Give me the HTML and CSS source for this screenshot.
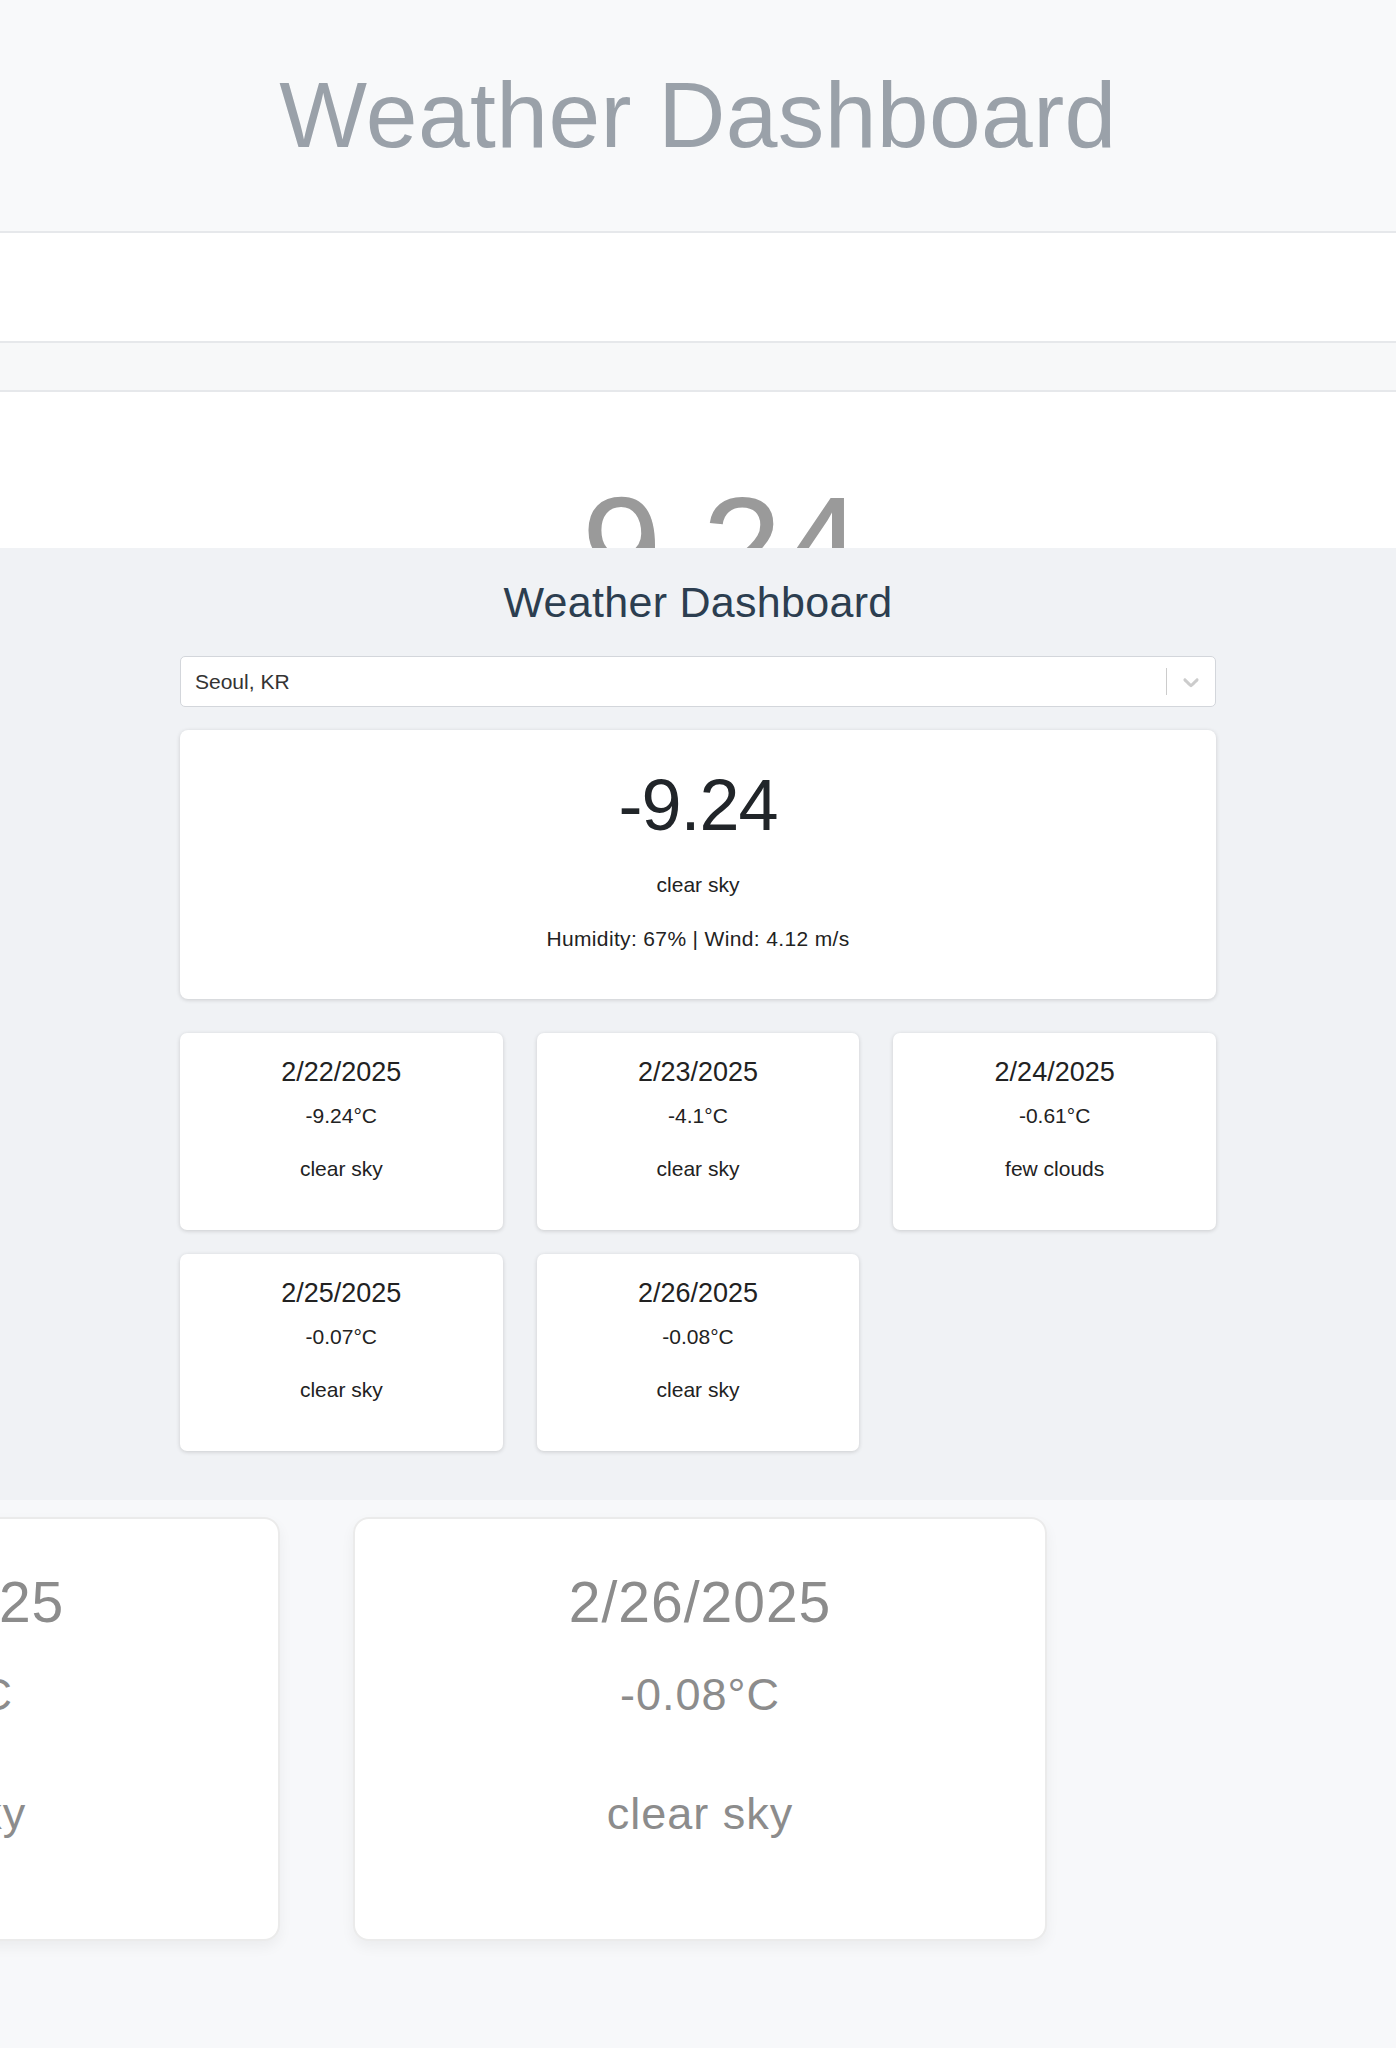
FILE: index.html
```html
<!DOCTYPE html>
<html lang="en">
<head>
<meta charset="utf-8">
<title>Weather Dashboard</title>
<link rel="stylesheet" href="styles.css">
</head>
<body>
<div class="page">
  <section class="ghost-top" aria-hidden="true">
    <header class="ghost-header"><div class="ghost-title">Weather Dashboard</div></header>
    <div class="ghost-strip ghost-strip-white"></div>
    <div class="ghost-strip ghost-strip-light"></div>
    <div class="ghost-card"><div class="ghost-temp">-9.24</div></div>
  </section>

  <main class="dashboard">
    <div class="container">
      <h1 class="title">Weather Dashboard</h1>

      <div class="select">
        <div class="select-value">Seoul, KR</div>
        <span class="select-separator"></span>
        <div class="select-indicator">
          <svg width="26" height="26" viewBox="0 0 20 20" aria-hidden="true"><path fill="#cccccc" d="M4.516 7.548c0.436-0.446 1.043-0.481 1.576 0l3.908 3.747 3.908-3.747c0.533-0.481 1.141-0.446 1.574 0 0.436 0.445 0.408 1.197 0 1.615-0.406 0.418-4.695 4.502-4.695 4.502-0.217 0.223-0.502 0.335-0.787 0.335s-0.57-0.112-0.789-0.335c0 0-4.287-4.084-4.695-4.502s-0.436-1.17 0-1.615z"/></svg>
        </div>
      </div>

      <div class="current">
        <div class="current-value">-9.24</div>
        <p class="current-desc">clear sky</p>
        <p class="current-meta">Humidity: 67% | Wind: 4.12 m/s</p>
      </div>

      <div class="forecast">
        <div class="fcard"><div class="fdate">2/22/2025</div><p class="ftemp">-9.24°C</p><p class="fdesc">clear sky</p></div>
        <div class="fcard"><div class="fdate">2/23/2025</div><p class="ftemp">-4.1°C</p><p class="fdesc">clear sky</p></div>
        <div class="fcard"><div class="fdate">2/24/2025</div><p class="ftemp">-0.61°C</p><p class="fdesc">few clouds</p></div>
        <div class="fcard"><div class="fdate">2/25/2025</div><p class="ftemp">-0.07°C</p><p class="fdesc">clear sky</p></div>
        <div class="fcard"><div class="fdate">2/26/2025</div><p class="ftemp">-0.08°C</p><p class="fdesc">clear sky</p></div>
      </div>
    </div>
  </main>

  <section class="ghost-bottom" aria-hidden="true">
    <div class="ghost-cards">
      <div class="ghost-fcard"><div class="gdate">2/25/2025</div><p class="gtemp">-0.07°C</p><p class="gdesc">clear sky</p></div>
      <div class="ghost-fcard"><div class="gdate">2/26/2025</div><p class="gtemp">-0.08°C</p><p class="gdesc">clear sky</p></div>
    </div>
  </section>
</div>
</body>
</html>
```

FILE: styles.css
```css
html, body {
  margin: 0;
  padding: 0;
}

body {
  font-family: "Liberation Sans", Arial, sans-serif;
  color: #222222;
  background: #f0f2f5;
  overflow: hidden;
}

.page {
  width: 100%;
}

/* ---------- faded, zoomed background (top) ---------- */
.ghost-top {
  height: 548px;
  overflow: hidden;
  background: #ffffff;
}

.ghost-header {
  height: 233px;
  box-sizing: border-box;
  background: #f8f9fa;
  border-bottom: 2px solid #e6e8eb;
  display: flex;
  align-items: center;
  justify-content: center;
}

.ghost-title {
  font-size: 93px;
  letter-spacing: 0.4px;
  color: #9aa1a9;
  line-height: normal;
}

.ghost-strip {
  box-sizing: border-box;
  border-bottom: 2px solid #e6e8eb;
}

.ghost-strip-white {
  height: 110px;
  background: #ffffff;
}

.ghost-strip-light {
  height: 49px;
  background: #f7f8f9;
}

.ghost-card {
  height: 156px;
  box-sizing: border-box;
  padding-top: 74px;
  overflow: hidden;
  text-align: center;
  background: #ffffff;
}

.ghost-temp {
  font-size: 144px;
  line-height: normal;
  color: #9a9a9a;
}

/* ---------- actual dashboard ---------- */
.dashboard {
  height: 952px;
  box-sizing: border-box;
  padding-top: 30px;
  background: #f0f2f5;
}

.container {
  width: 1036px;
  margin: 0 auto;
}

.title {
  margin: 0 0 29px;
  font-size: 43px;
  letter-spacing: 0.3px;
  font-weight: 400;
  line-height: normal;
  text-align: center;
  color: #2c3e50;
}

.select {
  height: 51px;
  box-sizing: border-box;
  display: flex;
  align-items: center;
  background: #ffffff;
  border: 1px solid #d3d6db;
  border-radius: 5px;
}

.select-value {
  flex: 1;
  padding-left: 14px;
  font-size: 21px;
  color: #333333;
}

.select-separator {
  align-self: stretch;
  width: 1px;
  margin: 11px 0;
  background: #cccccc;
}

.select-indicator {
  display: flex;
  align-items: center;
  padding: 0 11px;
}

.select-indicator svg {
  display: block;
}

.current {
  margin-top: 23px;
  padding: 27px 26px;
  background: #ffffff;
  border-radius: 8px;
  box-shadow: 0 1px 4px rgba(0, 0, 0, 0.16);
  text-align: center;
}

.current-value {
  margin: 7px 0 27px;
  font-size: 72px;
  letter-spacing: -1px;
  line-height: normal;
  color: #212529;
}

.current-desc {
  margin: 0 0 30px;
  font-size: 21px;
}

.current-meta {
  margin: 0 0 21px;
  font-size: 21px;
  letter-spacing: 0.35px;
}

.forecast {
  margin-top: 34px;
  display: grid;
  grid-template-columns: repeat(3, 1fr);
  column-gap: 34px;
  row-gap: 24px;
}

.fcard {
  height: 197px;
  box-sizing: border-box;
  padding-top: 24px;
  background: #ffffff;
  border-radius: 7px;
  box-shadow: 0 1px 4px rgba(0, 0, 0, 0.16);
  text-align: center;
}

.fdate {
  margin: 0 0 16px;
  font-size: 27px;
  line-height: normal;
}

.ftemp {
  margin: 0 0 29px;
  font-size: 21px;
}

.fdesc {
  margin: 0;
  font-size: 21px;
}

/* ---------- faded, zoomed background (bottom) ---------- */
.ghost-bottom {
  height: 548px;
  box-sizing: border-box;
  padding-top: 17px;
  overflow: hidden;
  background: #f7f8fa;
}

.ghost-cards {
  display: flex;
  gap: 73px;
  margin-left: -414px;
}

.ghost-fcard {
  flex: 0 0 694px;
  height: 424px;
  box-sizing: border-box;
  padding-top: 50px;
  background: #ffffff;
  border: 2px solid #ebebeb;
  border-radius: 16px;
  box-shadow: 0 6px 14px rgba(0, 0, 0, 0.05);
  text-align: center;
  color: #8c8c8c;
}

.gdate {
  margin: 0 0 34px;
  font-size: 57px;
  letter-spacing: 1px;
  line-height: normal;
}

.gtemp {
  margin: 0 0 67px;
  font-size: 45px;
  letter-spacing: 1px;
}

.gdesc {
  margin: 0;
  font-size: 45px;
  letter-spacing: 1px;
}
```
